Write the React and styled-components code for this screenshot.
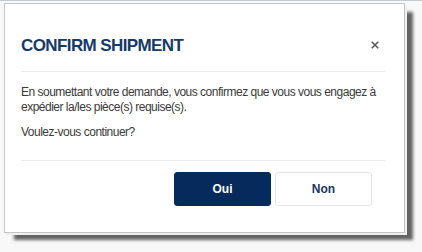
import React from "react";
import styled, { createGlobalStyle } from "styled-components";

const Global = createGlobalStyle`
  html, body { margin: 0; padding: 0; background: #f8f8f8; }
  body { font-family: Arial, "Liberation Sans", Helvetica, sans-serif; }
`;

const Page = styled.div`
  width: 422px;
  height: 252px;
  border-top: 1px solid #c6cbd3;
  box-sizing: border-box;
  padding: 2px 0 0 4px;
`;

const Dialog = styled.div`
  width: 401px;
  height: 230px;
  box-sizing: border-box;
  background: #fff;
  border: 1px solid #c4c4c4;
  box-shadow: 2px 2px 0 #efefef, 9px 8px 3px -1px rgba(0, 0, 0, 0.6);
  display: flex;
  flex-direction: column;
  padding: 0 19px 0 16px;
`;

const Header = styled.div`
  display: flex;
  align-items: center;
  justify-content: space-between;
  padding: 31px 6px 15px 0;
  border-bottom: 1px solid #ececec;
`;

const Title = styled.h2`
  margin: 0;
  font-size: 17px;
  line-height: 21px;
  font-weight: bold;
  color: #173a69;
  letter-spacing: -0.6px;
`;

const Close = styled.button`
  border: 0;
  background: none;
  padding: 0;
  width: 8px;
  height: 8px;
  display: flex;
  margin-top: -2px;
  cursor: pointer;
`;

const Body = styled.div`
  padding: 13px 0 10px;
  border-bottom: 1px solid #ececec;
`;

const Text = styled.p`
  margin: 0 0 10px;
  font-size: 12px;
  line-height: 15px;
  letter-spacing: -0.5px;
  color: #3a3a3a;
`;

const Footer = styled.div`
  display: flex;
  justify-content: flex-end;
  gap: 4px;
  padding: 11px 13px 0 0;
`;

const Button = styled.button`
  width: 97px;
  height: 34px;
  border-radius: 3px;
  font-family: Arial, "Liberation Sans", sans-serif;
  font-size: 12px;
  font-weight: bold;
  cursor: pointer;
  border: 1px solid ${(p) => (p.$primary ? "#062a5c" : "#e6e6e6")};
  background: ${(p) => (p.$primary ? "#062a5c" : "#fff")};
  color: ${(p) => (p.$primary ? "#fff" : "#1b3763")};
`;

export default function App() {
  return (
    <>
      <Global />
      <Page>
        <Dialog>
          <Header>
            <Title>CONFIRM SHIPMENT</Title>
            <Close aria-label="close">
              <svg width="8" height="8" viewBox="0 0 8 8">
                <path d="M0.7 0.7L7.3 7.3M7.3 0.7L0.7 7.3" stroke="#555" strokeWidth="1.5" />
              </svg>
            </Close>
          </Header>
          <Body>
            <Text>
              En soumettant votre demande, vous confirmez que vous vous engagez à expédier la/les pièce(s) requise(s).
            </Text>
            <Text>Voulez-vous continuer?</Text>
          </Body>
          <Footer>
            <Button $primary>Oui</Button>
            <Button>Non</Button>
          </Footer>
        </Dialog>
      </Page>
    </>
  );
}
